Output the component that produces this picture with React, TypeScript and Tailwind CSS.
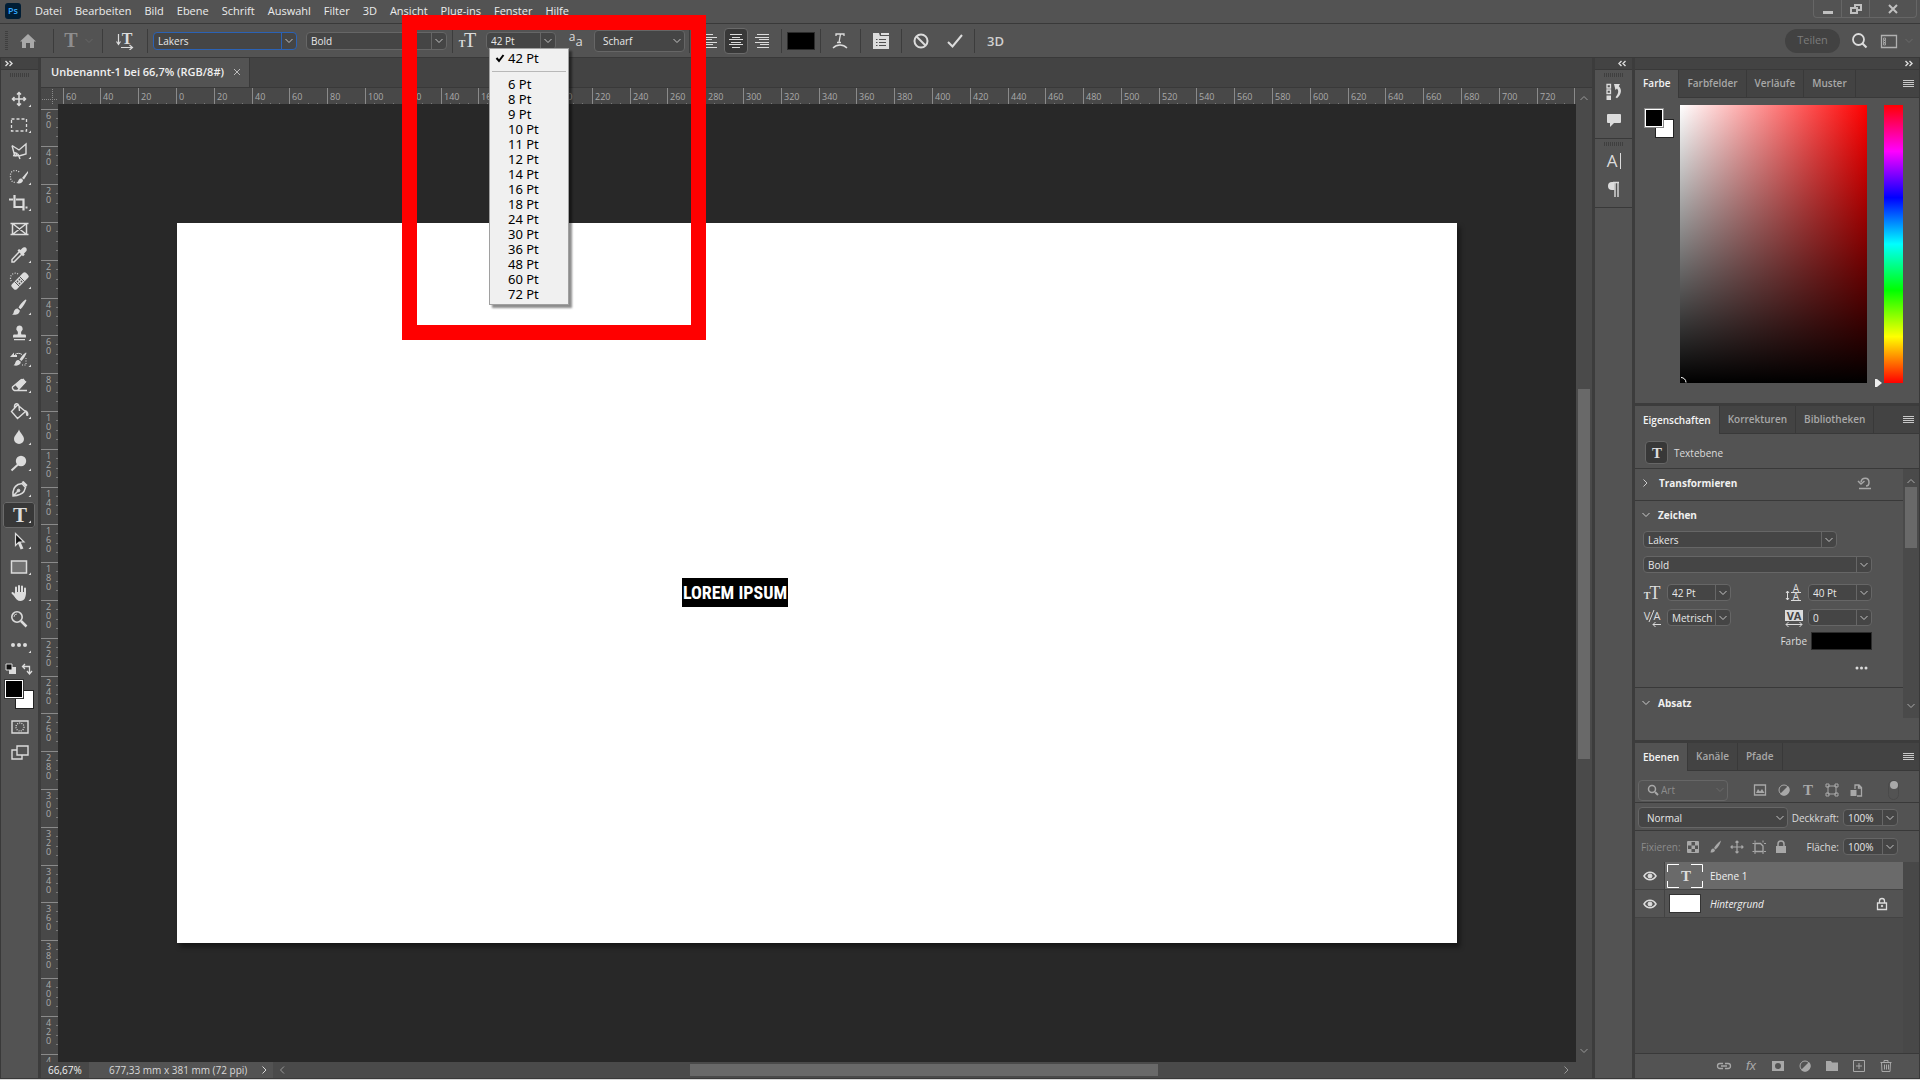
import type { ReactNode } from 'react';

const MM = 1280 / 677.33;

const menuItems = ['Datei', 'Bearbeiten', 'Bild', 'Ebene', 'Schrift', 'Auswahl', 'Filter', '3D', 'Ansicht', 'Plug-ins', 'Fenster', 'Hilfe'];
const sizes = [6, 8, 9, 10, 11, 12, 14, 16, 18, 24, 30, 36, 48, 60, 72];

const range = (from: number, to: number) => {
  const out: number[] = [];
  for (let v = from; v <= to; v += 20) out.push(v);
  return out;
};
const span = (v: number) => Math.round((v + 20) * MM) - Math.round(v * MM);

/* ---------- shared bits ---------- */

function Icon({ w = 18, h = 18, children, className = '' }: { w?: number; h?: number; children: ReactNode; className?: string }) {
  return (
    <svg width={w} height={h} viewBox={`0 0 ${w} ${h}`} fill="none" stroke="currentColor" className={`shrink-0 ${className}`} aria-hidden="true">
      {children}
    </svg>
  );
}

function Glyph({ x, y, size, children, sans = false, bold = true }: { x: number; y: number; size: number; children: string; sans?: boolean; bold?: boolean }) {
  return (
    <text
      x={x}
      y={y}
      fontSize={size}
      textAnchor="middle"
      stroke="none"
      fill="currentColor"
      className={sans ? "font-['Open_Sans',sans-serif]" : "font-['Liberation_Serif',serif]"}
      fontWeight={bold ? 700 : 400}
    >
      {children}
    </text>
  );
}

function Chevron({ dir = 'down', className = '' }: { dir?: 'down' | 'up' | 'left' | 'right'; className?: string }) {
  const d = {
    down: 'M1.5 3 5 6.5 8.5 3',
    up: 'M1.5 7 5 3.5 8.5 7',
    left: 'M7 1.5 3.5 5 7 8.5',
    right: 'M3.5 1.5 7 5 3.5 8.5',
  }[dir];
  return (
    <Icon w={10} h={10} className={className}>
      <path d={d} />
    </Icon>
  );
}

function Select({ label, value, className = '', split = true, focus = false }: { label: string; value: string; className?: string; split?: boolean; focus?: boolean }) {
  return (
    <div className={`relative flex rounded-sm border bg-[#454545] ${focus ? 'border-[#2b62b5]' : 'border-[#666666]'} ${className}`}>
      <select aria-label={label} defaultValue={value} className="w-full appearance-none bg-transparent pl-1 text-[10px] leading-[14px] text-[#e8e8e8] outline-none">
        <option>{value}</option>
      </select>
      <span className={`pointer-events-none absolute inset-y-0 right-0 flex w-[15px] items-center justify-center text-[#c4c4c4] ${split ? (focus ? 'border-l border-[#2b62b5]' : 'border-l border-[#666666]') : ''}`}>
        <Chevron />
      </span>
    </div>
  );
}

function Grip() {
  return <div className="mx-auto h-1 w-5 bg-[repeating-linear-gradient(90deg,#3f3f3f_0_1px,transparent_1px_2px)]" />;
}

function Divider() {
  return <div className="h-6 w-px shrink-0 bg-[#3c3c3c]" />;
}

function DoubleChevron({ left = false }: { left?: boolean }) {
  return (
    <Icon w={8} h={7} className="text-[#dddddd]">
      <path d={left ? 'M3.5 1 1 3.5 3.5 6M7.5 1 5 3.5 7.5 6' : 'M.5 1 3 3.5.5 6M4.5 1 7 3.5 4.5 6'} strokeWidth="1.4" />
    </Icon>
  );
}

const search = (
  <>
    <circle cx="7.5" cy="7.5" r="5.5" strokeWidth="1.8" />
    <path d="m11.5 11.5 4 4" strokeWidth="2.2" />
  </>
);

/* ---------- menu bar ---------- */

function MenuBar() {
  return (
    <header className="flex h-6 shrink-0 items-center border-b border-[#393939] pb-0.5">
      <div className="ml-[5px] flex size-4 items-center justify-center rounded-[3px] bg-[#001d34] text-[9px] font-semibold leading-4 text-[#31a8ff]">Ps</div>
      <nav className="ml-[14px] flex gap-[13px] text-[11px] leading-4 text-[#ececec]">
        {menuItems.map((m) => (
          <button key={m} type="button">{m}</button>
        ))}
      </nav>
      <div className="mr-[3px] ml-auto flex h-[18px] self-start rounded-b-sm border border-t-0 border-[#666666] text-[#c0c0c0]">
        <button type="button" aria-label="Minimieren" className="flex w-7 items-center justify-center border-r border-[#666666]">
          <Icon w={12} h={12}><path d="M1 9.5h10" strokeWidth="3" /></Icon>
        </button>
        <button type="button" aria-label="Wiederherstellen" className="flex w-7 items-center justify-center border-r border-[#666666]">
          <Icon w={14} h={12}>
            <path d="M2 5h6v5H2zM6 4V2h6v5H9" strokeWidth="2" />
          </Icon>
        </button>
        <button type="button" aria-label="Schließen" className="flex w-[46px] items-center justify-center">
          <Icon w={12} h={12}><path d="m2 2 8 8m0-8-8 8" strokeWidth="2" /></Icon>
        </button>
      </div>
    </header>
  );
}

/* ---------- options bar ---------- */

function SizeMenu() {
  return (
    <ul role="listbox" aria-label="Schriftgrad" className="absolute top-[16px] left-[3px] z-20 w-20 border border-[#a0a0a0] bg-[#f0f0f0] pt-px pb-0.5 font-['Noto_Sans',sans-serif] text-[13px] leading-[15px] text-black shadow-[3px_3px_2px_rgba(0,0,0,0.45)]">
      <li className="flex h-[17px] items-center">
        <Icon w={18} h={12} className="text-black"><path d="m6.500 6 2.500 3 4.500-6" strokeWidth="2" /></Icon>
        <button type="button">42 Pt</button>
      </li>
      <li className="mx-0.5 mt-[4px] mb-[5px] h-px bg-[#b8b8b8]" />
      {sizes.map((s) => (
        <li key={s} className="h-[15px] pl-[18px]">
          <button type="button" className="block">{s} Pt</button>
        </li>
      ))}
    </ul>
  );
}

function Align({ lines, label, active = false }: { lines: string; label: string; active?: boolean }) {
  return (
    <button type="button" aria-label={label} className={`flex h-[26px] w-6 shrink-0 items-center justify-center rounded-sm border ${active ? 'border-[#6a6a6a] bg-[#383838]' : 'border-transparent'}`}>
      <Icon w={14} h={14}><path d={lines} /></Icon>
    </button>
  );
}

function OptionsBar() {
  return (
    <div className="relative z-10 flex h-[34px] shrink-0 items-center border-b border-[#393939] text-[#dcdcdc]">
      <div className="ml-[5px] h-5 w-[3px] bg-[repeating-linear-gradient(#3f3f3f_0_1px,transparent_1px_2px)]" />
      <button type="button" aria-label="Startseite" className="ml-[11px] mr-4 text-[#a8a8a8]">
        <Icon><path d="m9 2 8 7.500h-2V16h-4v-5H7v5H3V9.500H1z" fill="currentColor" stroke="none" /></Icon>
      </button>
      <Divider />
      <button type="button" aria-label="Textwerkzeug" className="ml-2 flex items-center text-[#8e8e8e]">
        <Icon><Glyph x={9} y={15} size={20}>T</Glyph></Icon>
        <Chevron className="ml-1 text-[#666666]" />
      </button>
      <div className="w-2" />
      <Divider />
      <button type="button" aria-label="Textausrichtung" className="mx-[13px]">
        <Icon>
          <Glyph x={11} y={12} size={16}>T</Glyph>
          <path d="M2.500 2v10M.5 9.500l2 3 2-3M5 15.500h11M13.500 13l3 2.500-3 2.500" strokeWidth="1.2" />
        </Icon>
      </button>
      <Divider />
      <Select label="Schriftfamilie" value="Lakers" focus className="ml-[5px] h-[18px] w-36" />
      <Select label="Schriftschnitt" value="Bold" className="ml-[9px] mr-[5px] h-[18px] w-[141px]" />
      <Divider />
      <Icon w={20} className="mr-[8px] ml-[5px]">
        <Glyph x={4} y={15} size={10}>T</Glyph>
        <Glyph x={12} y={15} size={20} bold={false}>T</Glyph>
      </Icon>
      <div className="relative">
        <Select label="Schriftgrad" value="42 Pt" className="h-[18px] w-[70px]" />
        <SizeMenu />
      </div>
      <Icon className="ml-[11px]">
        <Glyph x={5} y={9} size={12} sans bold={false}>a</Glyph>
        <Glyph x={12} y={14} size={13} sans bold={false}>a</Glyph>
      </Icon>
      <Select label="Glättung" value="Scharf" split={false} className="ml-[9px] mr-[4px] h-[22px] w-[91px] pl-1" />
      <Divider />
      <div className="ml-[8px] flex gap-[2px]">
        <Align label="Linksbündig" lines="M0 .5h10M0 3.500h14M0 5.500h9M0 8.500h14M0 10.500h10M0 13.500h14" />
        <Align label="Zentriert" active lines="M1 .5h12M3 3.500h8M0 5.500h14M2 8.500h10M0 10.500h14M3 13.500h8" />
        <Align label="Rechtsbündig" lines="M2 .5h12M0 3.500h14M4 5.500h10M0 8.500h14M5 10.500h9M2 13.500h12" />
      </div>
      <div className="w-[7px]" />
      <Divider />
      <button type="button" aria-label="Textfarbe" className="mx-[5px] h-[18px] w-7 border border-[#2c2c2c] bg-black" />
      <Divider />
      <button type="button" aria-label="Text verkrümmen" className="mr-[11px] ml-[10px]">
        <Icon>
          <path d="M5 4V2h8v2M9.500 2 8 10.500M6 10.500h4" strokeWidth="1.3" />
          <path d="M2 16c4-4 10-4 14 0" strokeWidth="1.4" />
        </Icon>
      </button>
      <Divider />
      <button type="button" aria-label="Zeichenbedienfeld" className="mx-[11px]">
        <Icon>
          <path d="M1 1h6l1 3h9v13H1zM9 1h8v2H9z" fill="currentColor" stroke="none" />
          <path d="M4 7.500h1.500M7 7.500h7M4 10.500h1.500M7 10.500h7M4 13.500h1.500M7 13.500h7" className="stroke-[#505050]" />
        </Icon>
      </button>
      <Divider />
      <button type="button" aria-label="Abbrechen" className="ml-[10px] mr-4">
        <Icon><circle cx="9" cy="9" r="6.500" strokeWidth="2" /><path d="m4.500 4.500 9 9" strokeWidth="2" /></Icon>
      </button>
      <button type="button" aria-label="Bestätigen" className="mr-[10px]">
        <Icon><path d="m2 10 4.500 4.500L16 3" strokeWidth="2" /></Icon>
      </button>
      <Divider />
      <button type="button" className="ml-3 text-[13px] leading-4 font-semibold text-[#d0d0d0]">3D</button>
      <button type="button" className="ml-auto h-6 w-[55px] rounded-full bg-[#424242] text-[11px] text-[#7c7c7c]">Teilen</button>
      <button type="button" aria-label="Suchen" className="ml-[11px]"><Icon>{search}</Icon></button>
      <button type="button" aria-label="Arbeitsbereich" className="ml-[11px] flex items-center text-[#b0b0b0]">
        <Icon>
          <path d="M1.500 3.500h15v12h-15z" strokeWidth="1.300" />
          <path d="M3.500 6h2v2h-2zM3.500 8.500h2v2h-2zM3.500 11h2v2h-2z" strokeWidth=".8" />
        </Icon>
        <Chevron className="mr-[6px] ml-[6px] text-[#6a6a6a]" />
      </button>
    </div>
  );
}

/* ---------- toolbar ---------- */

const brush = <path d="M20.500 5.500c-3 2-5.500 5-7 8l2 1.800c2.500-2.500 5-6.300 6-9.300zM12.500 14.500c-2.500-.3-3.500 2-4 4.500-.2.800-1 1.200-1.500 1.500 4 1 7.800-.5 7.800-4z" fill="currentColor" stroke="none" />;

const tools: { name: string; art: ReactNode; flat?: boolean }[] = [
  { name: 'Verschieben', art: <path d="M14 6.500v13M7.500 13h13M12 8.500l2-2 2 2M12 17.500l2 2 2-2M9.500 11l-2 2 2 2M18.500 11l2 2-2 2" strokeWidth="1.500" /> },
  { name: 'Auswahlrechteck', art: <path d="M6.500 7h15v12h-15z" strokeWidth="1.300" strokeDasharray="3 2" /> },
  { name: 'Polygon-Lasso', art: <path d="m7 7.500 7 4.500 7-6v10l-7 2-4.500-1L7 7.500M9 14.500l3 1-1 2.500-3-.5M13 16l2 5" strokeWidth="1.400" /> },
  {
    name: 'Schnellauswahl',
    art: (
      <>
        <path d="M14 8c-2-2.500-8-2-8.500 2.500-.3 4 0 8 6 8" strokeDasharray="1 1.500" strokeWidth="1.300" />
        <path d="m23 7-6 7 2 1.500L23 9zM16.500 14.500c-2-.5-3 1-3.500 3l-1.500 1.500c3 1 6.500 0 6.500-3z" fill="currentColor" stroke="none" />
      </>
    ),
  },
  { name: 'Freistellen', art: <path d="M4 9.500h4M9.500 5v12h8M11 9.500h7.500v11M20.500 17.500h2" strokeWidth="2.200" /> },
  { name: 'Rahmen', flat: true, art: <path d="M7.500 7.500h14v11h-14zM7.500 7.500l14 11m0-11-14 11M5.500 7.500h3M20.500 7.500h3M5.500 18.500h3M20.500 18.500h3" strokeWidth="1.500" /> },
  {
    name: 'Pipette',
    art: (
      <>
        <path d="M14.500 9.500 7 17.500v2.500h2l8-8" strokeWidth="1.500" />
        <path d="m12.500 8.500 1.500-1.500 1.500 1 2-2c1-1.200 3.500-.8 4 .5.600 1.500 0 2.500-1 3.500l-1.500 1.500.7 1.200-1.700 1.600z" fill="currentColor" stroke="none" />
      </>
    ),
  },
  {
    name: 'Reparaturpinsel',
    art: (
      <>
        <path d="M13 6c-3-2-7.500 0-7.500 4 0 2 .5 3 1.500 4" strokeDasharray="1 1.500" strokeWidth="1.200" />
        <rect x="5" y="9.500" width="20" height="7" rx="2" transform="rotate(-45 15 13)" fill="currentColor" stroke="none" />
        <path d="m9.500 13.500 5 5M14.500 8.500l5 5" className="stroke-[#535353]" />
        <g className="fill-[#535353]" stroke="none">
          <circle cx="14.500" cy="11.500" r=".9" /><circle cx="12.500" cy="13.500" r=".9" /><circle cx="16.500" cy="13.500" r=".9" /><circle cx="14.500" cy="15.500" r=".9" />
        </g>
      </>
    ),
  },
  { name: 'Pinsel', art: brush },
  {
    name: 'Stempel',
    art: (
      <path d="M14.500 5.500a3.200 3.200 0 0 1 2 5.700c-.6.700-.5 2.300 0 3.300H20c1 0 1 1 1 3H8c0-2 0-3 1-3h3.500c.5-1 .6-2.600 0-3.300a3.200 3.200 0 0 1 2-5.700zM9 19h11v1.200H9z" fill="currentColor" stroke="none" />
    ),
  },
  {
    name: 'Protokollpinsel',
    art: (
      <>
        <path d="M21 6.500c-3 2-5 4.500-6.500 7l2 1.500c2-2 4.200-5.500 5-8zM13.500 14c-2-.2-3 1.500-3.500 3.500-.2.800-1 1.500-1.500 1.800 4 1 7.300-.3 7.300-3.500zM5 11l4-4.500V9h3v2z" fill="currentColor" stroke="none" />
        <path d="M10 8.500c2-1.500 5-1.500 7 0" />
        <path d="M21 12v7h-4" strokeDasharray="1 1.500" />
      </>
    ),
  },
  {
    name: 'Radiergummi',
    art: (
      <>
        <path d="m15 8 3.500-1.500L21 10l-7 7.500-3.800-4.500z" fill="currentColor" stroke="none" />
        <path d="m16.500 7.500-9 7.500c-.5 1 .5 3 2 3.500h3l8-8.500zM10 18.500h12" strokeWidth="1.400" />
      </>
    ),
  },
  {
    name: 'Füllwerkzeug',
    art: (
      <>
        <path d="m12.500 7-6 6.500 6 7 8-7zM9.500 10c-.5-5 4-6 4.500-1l.5 4" strokeWidth="1.400" />
        <path d="M20 12c2 .5 3.500 2 3.500 4.500 0 2-2.500 2-2.500 0z" fill="currentColor" stroke="none" />
      </>
    ),
  },
  { name: 'Weichzeichner', art: <path d="M14 5.500c1 3.500 5 6 5 9.500a5 5 0 0 1-10 0c0-3.500 4-6 5-9.500z" fill="currentColor" stroke="none" /> },
  {
    name: 'Abwedler',
    art: (
      <>
        <circle cx="16" cy="11" r="5.200" fill="currentColor" stroke="none" />
        <path d="m13 14.500-6.500 6" strokeWidth="2" />
      </>
    ),
  },
  {
    name: 'Zeichenstift',
    art: (
      <>
        <path d="M8 20c-.5-5 1-9.500 5-11.500l4-1 3.500 4-1.500 4c-2.500 3.500-6.500 4-11 4.500zM8 20l5-5" strokeWidth="1.500" />
        <circle cx="13.500" cy="14.500" r="1.300" fill="currentColor" />
        <path d="m16.500 6 2-1 4 4-1.500 2z" fill="currentColor" stroke="none" />
      </>
    ),
  },
  { name: 'Text', art: <Glyph x={15} y={20} size={21}>T</Glyph> },
  {
    name: 'Pfadauswahl',
    art: (
      <>
        <path d="m14 14 3 7" strokeWidth="3" />
        <path d="M10.500 5.500v12l3.500-3.500h5z" className="fill-[#161616]" strokeWidth="1.200" />
      </>
    ),
  },
  { name: 'Rechteck', art: <path d="M6.500 7h15v12h-15z" className="fill-[#737373]" strokeWidth="1.500" /> },
  {
    name: 'Hand',
    art: (
      <>
        <path d="M11 13V7.500M14 12V6M17 12V6.500M20 13.500V8.500M11 16.500 7.500 13" strokeWidth="2" strokeLinecap="round" />
        <path d="M10 12h11c0 5-1.500 9-5.500 9-3 0-5-2-6.500-5.500z" fill="currentColor" stroke="none" />
      </>
    ),
  },
  {
    name: 'Zoom',
    flat: true,
    art: (
      <>
        <circle cx="12" cy="11" r="5.200" strokeWidth="1.600" />
        <path d="m16 15 5.500 5.500" strokeWidth="2.500" />
        <path d="M9 11a3 3 0 0 1 3-3" strokeWidth=".8" />
      </>
    ),
  },
  {
    name: 'Symbolleiste bearbeiten',
    art: (
      <g fill="currentColor" stroke="none">
        <circle cx="8" cy="13" r="2" /><circle cx="14" cy="13" r="2" /><circle cx="20" cy="13" r="2" />
      </g>
    ),
  },
];

function Toolbar() {
  return (
    <aside className="flex w-[41px] shrink-0 flex-col border-l border-l-[#393939] border-r-[3px] border-r-[#3c3c3c] text-[#dcdcdc]">
      <div className="flex h-3 items-center border-b border-[#393939] bg-[#434343] pl-1">
        <DoubleChevron />
      </div>
      <div className="pt-[3px] pb-[9px]"><Grip /></div>
      <div className="flex flex-col pl-[2px]">
        {tools.map((t) => (
          <button
            key={t.name}
            type="button"
            aria-label={t.name}
            className={`flex h-[26px] w-8 items-center justify-center rounded-[3px] ${t.name === 'Text' ? 'bg-[#383838] outline -outline-offset-1 outline-[#6a6a6a]' : ''}`}
          >
            <Icon w={28} h={26}>
              {t.art}
              {!t.flat && <path d="M26 18.500V21h-2.500z" fill="currentColor" stroke="none" />}
            </Icon>
          </button>
        ))}
      </div>
      <div className="mt-[5px] flex items-center justify-between pr-[5px] pl-1">
        <Icon w={12} h={12}>
          <path d="M4 4h7v7H4z" fill="currentColor" stroke="none" />
          <path d="M1 1h6v6H1z" className="fill-[#111111]" />
        </Icon>
        <Icon w={12} h={12}><path d="M2 3.500h6.500V10M4 1 1.500 3.500 4 6M6 8l2.500 3L11 8" strokeWidth="1.300" /></Icon>
      </div>
      <div className="mt-[5px] grid w-[29px] self-start pl-1">
        <span className="col-start-1 row-start-1 mt-[10px] ml-[10px] size-[19px] border border-[#222222] bg-white" />
        <span className="z-10 col-start-1 row-start-1 size-[18px] border border-white bg-black outline outline-[#333333]" />
      </div>
      <div className="mt-[9px] flex flex-col items-center gap-[8px]">
        <button type="button" aria-label="Maskierungsmodus">
          <Icon><path d="M1 3h16v12H1z" strokeWidth="1.400" /><circle cx="9" cy="9" r="4" strokeDasharray="1 1.200" strokeWidth="1.300" /></Icon>
        </button>
        <button type="button" aria-label="Bildschirmmodus">
          <Icon><path d="M6 2h11v9H6zM6 6H1v9h10v-4" strokeWidth="1.400" /></Icon>
        </button>
      </div>
    </aside>
  );
}

/* ---------- document ---------- */

function TopRuler() {
  return (
    <div className="flex min-w-0 flex-1 overflow-hidden pl-[5px]">
      {range(-60, 740).map((v) => (
        <div key={v} className="flex shrink-0 flex-col justify-between border-l border-[#8a8a8a]" style={{ width: span(v) }}>
          <span className="pt-[3px] pl-0.5 text-[9px] leading-3 text-[#aaaaaa]">{v > 720 ? '' : Math.abs(v)}</span>
          <span className="grid h-0.5 shrink-0 grid-cols-4 divide-x divide-[#7a7a7a]"><i /><i /><i /><i /></span>
        </div>
      ))}
    </div>
  );
}

function SideRuler() {
  return (
    <div className="flex h-full w-[17px] shrink-0 flex-col overflow-hidden bg-[#484848] pt-[5px]">
      {range(-60, 440).map((v) => (
        <div key={v} className="flex shrink-0 justify-between border-t border-[#8a8a8a]" style={{ height: span(v) }}>
          <span className="flex w-4 flex-col items-center pt-px text-[9px] leading-[9px] text-[#aaaaaa]">
            {String(Math.abs(v)).split('').map((c, i) => (
              <span key={i}>{c}</span>
            ))}
          </span>
          <span className="grid w-0.5 shrink-0 grid-rows-4 divide-y divide-[#7a7a7a]"><i /><i /><i /><i /></span>
        </div>
      ))}
    </div>
  );
}

function Document() {
  return (
    <main className="flex min-w-0 flex-1 flex-col">
      <div className="flex h-[30px] shrink-0 border-b border-[#393939] bg-[#434343]">
        <div className="flex items-center gap-[9px] border-r border-[#393939] bg-[#535353] pr-2 pb-px pl-[10px] text-[11px] font-semibold text-[#f0f0f0]">
          <h1>Unbenannt-1 bei 66,7% (RGB/8#)</h1>
          <button type="button" aria-label="Tab schließen">
            <Icon w={8} h={8} className="text-[#bbbbbb]"><path d="m1 1 6 6m0-6L1 7" /></Icon>
          </button>
        </div>
      </div>
      <div className="flex min-h-0 flex-1">
        <div className="flex min-w-0 flex-1 flex-col">
          <div className="flex h-[16px] shrink-0 bg-[#484848]">
            <div className="flex w-[17px] shrink-0">
              <Icon w={17} h={16} className="text-[#8a8a8a]"><path d="M1 11.500h16M11.500 1v15" strokeDasharray="1 1" /></Icon>
            </div>
            <TopRuler />
          </div>
          <div className="flex min-h-0 flex-1">
            <SideRuler />
            <div className="flex min-w-0 flex-1 items-center justify-center overflow-hidden bg-[#282828]">
              <div className="flex h-[720px] w-[1280px] shrink-0 items-center justify-center bg-white pb-[1px] shadow-[3px_4px_5px_rgba(0,0,0,0.45)]">
                <p className="mr-[164px] mt-5 flex h-[29px] w-[106px] items-center justify-center bg-black font-['Liberation_Sans_Narrow','Roboto_Condensed','Roboto',sans-serif] text-[18px] leading-7 font-bold whitespace-nowrap text-white">LOREM IPSUM</p>
              </div>
            </div>
          </div>
        </div>
        <div className="flex w-4 shrink-0 flex-col items-center bg-[#4a4a4a] pt-[5px] pb-[6px] text-[#999999]">
          <Chevron dir="up" />
          <div className="flex w-full min-h-0 flex-1 flex-col items-center pt-[286px]">
            <div className="h-[370px] w-3 bg-[#696969]" />
          </div>
          <Chevron />
        </div>
      </div>
      <div className="flex h-4 shrink-0 items-center bg-[#4a4a4a] text-[10px] leading-[14px] text-[#d8d8d8]">
        <input aria-label="Zoomstufe" defaultValue="66,67%" className="h-4 w-12 bg-[#484848] pl-[7px] text-[#f0f0f0]" />
        <div className="flex h-4 w-46 items-center justify-between bg-[#535353] pr-1 pl-5">
          <span>677,33 mm x 381 mm (72 ppi)</span>
          <Chevron dir="right" />
        </div>
        <Chevron dir="left" className="ml-1 text-[#999999]" />
        <div className="flex flex-1 justify-center">
          <div className="h-3 w-[468px] bg-[#696969]" />
        </div>
        <Chevron dir="right" className="mr-[21px] text-[#999999]" />
      </div>
    </main>
  );
}

/* ---------- right dock ---------- */

function IconDock() {
  return (
    <aside className="flex w-[43px] shrink-0 flex-col border-x-[3px] border-[#3c3c3c] text-[#dcdcdc]">
      <div className="flex h-3 items-center justify-end border-b border-[#393939] bg-[#434343] pr-[6px]">
        <DoubleChevron left />
      </div>
      <div className="h-[69px] border-b border-[#393939] pt-[3px]">
        <Grip />
        <div className="flex flex-col items-center gap-[10px] pt-[6px]">
          <button type="button" aria-label="Protokoll">
            <Icon>
              <path d="M2 1.500h3.500V5H2zM2 7h3.500v3.500H2z" strokeWidth="1.300" />
              <path d="M1.500 12.500h4.500V17H1.500zM9 1h6L13.800 3.300c3.500 3.200 2.700 8-1.800 12l-1.500-1c3-3.500 3.500-6.500 1.500-8.800L10.500 7z" fill="currentColor" stroke="none" />
            </Icon>
          </button>
          <button type="button" aria-label="Kommentare">
            <Icon><path d="M3 3h12q1 0 1 1v7q0 1-1 1H9l-4 4v-4H3q-1 0-1-1V4q0-1 1-1z" fill="currentColor" stroke="none" /></Icon>
          </button>
        </div>
      </div>
      <div className="h-[69px] border-b border-[#393939] pt-[3px]">
        <Grip />
        <div className="flex flex-col items-center gap-[10px] pt-[6px]">
          <button type="button" aria-label="Zeichen">
            <Icon><Glyph x={7} y={15} size={17} sans bold={false}>A</Glyph><path d="M15.500 1v16" /></Icon>
          </button>
          <button type="button" aria-label="Absatz">
            <Icon>
              <path d="M13 2v15M10 2v15M8 2.500h6" strokeWidth="1.400" />
              <path d="M9.500 2H7a4 4 0 0 0 0 8h2.500z" fill="currentColor" stroke="none" />
            </Icon>
          </button>
        </div>
      </div>
    </aside>
  );
}

function Tabs({ items }: { items: string[] }) {
  return (
    <div role="tablist" className="flex h-[28px] shrink-0 items-stretch bg-[#434343] text-[10px] font-semibold">
      {items.map((t, i) => (
        <button
          key={t}
          type="button"
          role="tab"
          aria-selected={i === 0}
          className={`border-r border-[#393939] px-2 pb-px ${i === 0 ? 'bg-[#535353] text-[#f4f4f4]' : 'border-b text-[#a8a8a8]'}`}
        >
          {t}
        </button>
      ))}
      <div className="flex flex-1 items-center justify-end border-b border-[#393939] pr-[5px] text-[#c8c8c8]">
        <Icon w={11} h={8}><path d="M0 .5h11M0 2.500h11M0 4.500h11M0 6.500h11" /></Icon>
      </div>
    </div>
  );
}

function ColorPanel() {
  return (
    <section className="flex h-[336px] shrink-0 flex-col border-b-[3px] border-[#3c3c3c]">
      <Tabs items={['Farbe', 'Farbfelder', 'Verläufe', 'Muster']} />
      <div className="flex pt-[7px] pl-[10px]">
        <div className="grid w-[35px] shrink-0 self-start pt-1">
          <span className="col-start-1 row-start-1 mt-[10px] ml-[10px] size-[19px] border border-[#222222] bg-white" />
          <span className="z-10 col-start-1 row-start-1 size-[18px] border border-white bg-black outline outline-[#8a8a8a]" />
        </div>
        <div className="flex h-[278px] min-w-0 flex-1 items-end bg-[linear-gradient(to_top,#000,transparent),linear-gradient(to_right,#fff,#f00)]">
          <Icon w={7} h={7} className="text-white"><path d="M1 1.500a5 5 0 0 1 5 5" /></Icon>
        </div>
        <div className="flex w-[17px] items-end justify-end pr-0.5">
          <Icon w={8} h={8} className="-mb-1"><path d="M1 0h2l5 4-5 4H1z" className="fill-[#eeeeee]" stroke="none" /></Icon>
        </div>
        <div className="mr-4 h-[278px] w-[19px] bg-[linear-gradient(to_bottom,#f00,#f0f,#00f,#0ff,#0f0,#ff0,#f00)]" />
      </div>
    </section>
  );
}

const leading = (
  <>
    <Glyph x={11} y={8} size={10} sans bold={false}>A</Glyph>
    <Glyph x={11} y={16} size={10} sans bold={false}>A</Glyph>
    <path d="M6 8.500h10M6 16.500h10M2.500 7v9M1 9l1.500-2L4 9M1 14l1.500 2L4 14" />
  </>
);
const kerning = (
  <>
    <Glyph x={4} y={11} size={11} sans bold={false}>V</Glyph>
    <Glyph x={14} y={11} size={11} sans bold={false}>A</Glyph>
    <path d="m6 13 5-12M10 15.500h8M12.500 13 10 15.500l2.500 2.500" />
  </>
);
const tracking = (
  <>
    <path d="M0 1h18v11H0z" fill="currentColor" stroke="none" />
    <text x="9" y="11" fontSize="11" fontWeight="700" textAnchor="middle" stroke="none" className="fill-[#444444] font-['Open_Sans',sans-serif]">VA</text>
    <path d="M1 15.500h16M3.500 13 1 15.500 3.500 18M14.500 13l2.500 2.500-2.500 2.500" />
  </>
);

function PropertiesPanel() {
  return (
    <section className="flex h-[337px] shrink-0 flex-col border-b-[3px] border-[#3c3c3c] text-[10px] leading-[14px]">
      <Tabs items={['Eigenschaften', 'Korrekturen', 'Bibliotheken']} />
      <div className="flex h-[35px] shrink-0 items-center gap-[6px] border-b border-[#393939] pt-[3px] pl-[10px]">
        <span className="flex size-[23px] items-center justify-center rounded-sm border border-[#666666] bg-[#383838]">
          <Icon><Glyph x={9} y={14} size={15}>T</Glyph></Icon>
        </span>
        Textebene
      </div>
      <div className="flex min-h-0 flex-1">
        <div className="flex min-w-0 flex-1 flex-col">
          <div className="flex h-8 shrink-0 items-center border-b border-[#393939] pr-[30px] pb-[3px] pl-[5px] font-bold text-[#f0f0f0]">
            <Chevron dir="right" className="mr-[9px] text-[#cccccc]" />
            Transformieren
            <button type="button" aria-label="Zurücksetzen" className="ml-auto text-[#a8a8a8]">
              <Icon w={16} h={14}><path d="M2 12.500h12M4 6c1-5 8-5 8 .5 0 2-1 3.500-3 3.500M1 5l3 3 3.500-3" strokeWidth="1.500" /></Icon>
            </button>
          </div>
          <div className="flex h-[187px] shrink-0 flex-col border-b border-[#393939] pr-[31px] pl-2">
            <h2 className="-ml-[2px] flex h-[30px] items-center gap-[7px] pb-0.5 font-bold text-[#f0f0f0]">
              <Chevron className="text-[#cccccc]" />
              Zeichen
            </h2>
            <Select label="Schriftfamilie" value="Lakers" className="h-[17px] w-[194px]" />
            <Select label="Schriftschnitt" value="Bold" className="mt-[8px] h-[17px]" />
            <div className="mt-[11px] flex h-[17px] items-center">
              <Icon className="mr-[6px]"><Glyph x={4} y={15} size={10}>T</Glyph><Glyph x={12} y={15} size={18} bold={false}>T</Glyph></Icon>
              <Select label="Schriftgrad" value="42 Pt" className="h-[17px] w-[64px]" />
              <Icon className="mr-[5px] ml-auto">{leading}</Icon>
              <Select label="Zeilenabstand" value="40 Pt" className="h-[17px] w-[64px]" />
            </div>
            <div className="mt-[8px] flex h-[17px] items-center">
              <Icon className="mr-[6px]">{kerning}</Icon>
              <Select label="Kerning" value="Metrisch" className="h-[17px] w-[64px]" />
              <Icon className="mr-[5px] ml-auto">{tracking}</Icon>
              <Select label="Laufweite" value="0" className="h-[17px] w-[64px]" />
            </div>
            <div className="mt-[6px] flex items-center justify-end gap-1">
              <span id="farbe">Farbe</span>
              <button type="button" aria-labelledby="farbe" className="h-[18px] w-[61px] border border-[#2c2c2c] bg-black" />
            </div>
            <button type="button" aria-label="Weitere Optionen" className="mt-[14px] mr-1 self-end">
              <Icon w={13} h={8}>
                <g fill="currentColor" stroke="none"><circle cx="2" cy="4" r="1.500" /><circle cx="6.500" cy="4" r="1.500" /><circle cx="11" cy="4" r="1.500" /></g>
              </Icon>
            </button>
          </div>
          <h2 className="flex h-[30px] items-center gap-[7px] pb-px pl-[6px] font-bold text-[#f0f0f0]">
            <Chevron className="text-[#cccccc]" />
            Absatz
          </h2>
        </div>
        <div className="mb-[22px] flex w-4 flex-col items-center justify-between bg-[#4a4a4a] py-[7px] text-[#aaaaaa]">
          <div className="flex flex-col items-center gap-px">
            <Chevron dir="up" />
            <div className="h-[61px] w-3 bg-[#696969]" />
          </div>
          <Chevron />
        </div>
      </div>
    </section>
  );
}

const imageIcon = <><path d="M3.500 4h11v10h-11z" strokeWidth="1.300" /><path d="m5 12 2-4 2 2.500L11 8l2.500 4z" fill="currentColor" stroke="none" /></>;
const adjustIcon = <><circle cx="9" cy="9" r="5" /><path d="M13 5a5.500 5.500 0 1 1-8 8z" fill="currentColor" stroke="none" /></>;
const shapeIcon = <path d="M5 5h8v8H5zM3 3h3v3H3zM12 3h3v3h-3zM3 12h3v3H3zM12 12h3v3h-3z" />;
const smartIcon = <><path d="M8 8V4h4l2.500 2.500V15H10M11.500 4v3h3" strokeWidth="1.300" /><path d="M3.500 9h6v6h-6z" fill="currentColor" stroke="none" /></>;
const lockIcon = <><path d="M4 8h10v7H4z" fill="currentColor" stroke="none" /><path d="M6 8V6a3 3 0 0 1 6 0v2" strokeWidth="1.500" /></>;
const checkerIcon = <><path d="M3.500 3.500h11v11h-11z" /><path d="M4 4h3.500v3.500H4zM11 4h3.500v3.500H11zM7.500 7.500H11V11H7.500zM4 11h3.500v3.500H4zM11 11h3.500v3.500H11z" fill="currentColor" stroke="none" /></>;
const moveIcon = <path d="M9 3v12M3 9h12M7.500 4.500 9 3l1.500 1.500M7.500 13.500 9 15l1.500-1.500M4.500 7.500 3 9l1.500 1.500M13.500 7.500 15 9l-1.500 1.500" strokeWidth="1.200" />;
const artboardIcon = <><path d="M5 5.500h5.500L13 8v5.500H5z" strokeWidth="1.300" /><path d="M2.500 5.500h2M5 2.500v2M13 14v2M14 13.500h2M13 2.500v2M14 5.500h2M5 14v2M2.500 13.500h2" /></>;
const brushIcon = <path d="M15 2.500C12 4.500 9 8 8 10l1.500 1.500C12 9.500 14.500 6 15 2.500zM7.500 10.500c-2 0-2.500 1.500-3 4 2.500 0 4.500-.5 4.500-2.500z" fill="currentColor" stroke="none" />;

function Eye() {
  return (
    <button type="button" aria-label="Ebenensichtbarkeit" className="flex w-[30px] shrink-0 items-center justify-center self-stretch border-r border-[#434343] bg-[#535353]">
      <Icon w={14} h={10}>
        <path d="M1 5c3-5 9-5 12 0-3 5-9 5-12 0z" strokeWidth="1.500" />
        <circle cx="7" cy="5" r="2" fill="currentColor" />
      </Icon>
    </button>
  );
}

function LayersPanel() {
  return (
    <section className="flex min-h-0 flex-1 flex-col text-[10px] leading-[14px]">
      <Tabs items={['Ebenen', 'Kanäle', 'Pfade']} />
      <div className="flex h-8 shrink-0 items-center border-b border-[#393939] pt-[7px] pr-[20px] pl-[3px] text-[#a8a8a8]">
        <div className="relative flex h-[21px] w-[90px] items-center rounded-sm border border-[#666666] pl-2">
          <Icon w={12} h={12}><circle cx="5" cy="5" r="3.500" strokeWidth="1.500" /><path d="m8 8 3 3" strokeWidth="2" /></Icon>
          <input aria-label="Ebenenfilter" placeholder="Art" className="ml-0.5 w-10 bg-transparent placeholder:text-[#8c8c8c]" />
          <Chevron className="ml-auto mr-[2px] text-[#6a6a6a]" />
        </div>
        <div className="ml-[23px] flex gap-[6px]">
          <Icon>{imageIcon}</Icon>
          <Icon>{adjustIcon}</Icon>
          <Icon><Glyph x={9} y={14} size={15}>T</Glyph></Icon>
          <Icon>{shapeIcon}</Icon>
          <Icon>{smartIcon}</Icon>
        </div>
        <span className="ml-auto flex h-5 w-[11px] items-start justify-center rounded-md border border-[#4a4a4a]">
          <span className="size-2 rounded-full bg-[#a8a8a8]" />
        </span>
      </div>
      <div className="flex h-7 shrink-0 items-center border-b border-[#393939] pt-0.5 pr-[21px] pl-[3px]">
        <Select label="Füllmethode" value="Normal" split={false} className="h-[21px] w-[150px] pl-1" />
        <span className="ml-auto">Deckkraft:</span>
        <Select label="Deckkraft" value="100%" className="ml-1 h-[17px] w-[55px]" />
      </div>
      <div className="flex h-[31px] shrink-0 items-center pr-[21px] pl-[6px]">
        <span className="text-[#8c8c8c]">Fixieren:</span>
        <div className="ml-[3px] flex gap-1 text-[#a8a8a8]">
          <Icon>{checkerIcon}</Icon>
          <Icon>{brushIcon}</Icon>
          <Icon>{moveIcon}</Icon>
          <Icon>{artboardIcon}</Icon>
          <Icon>{lockIcon}</Icon>
        </div>
        <span className="ml-auto">Fläche:</span>
        <Select label="Fläche" value="100%" className="ml-1 h-[17px] w-[55px]" />
      </div>
      <div className="flex min-h-0 flex-1 bg-[#4b4b4b]">
        <ul className="min-w-0 flex-1">
          <li className="flex h-7 items-center border-b border-[#434343] bg-[#6a6a6a]">
            <Eye />
            <Icon w={36} h={24} className="mr-[7px] ml-[2px] text-white">
              <path d="M.5 8V.5H12M24 .5h11.500V8M.5 17v6.500H12M24 23.500h11.500V17" />
              <g className="text-[#dcdcdc]"><Glyph x={19} y={17} size={15}>T</Glyph></g>
            </Icon>
            <span className="text-[#f0f0f0]">Ebene 1</span>
          </li>
          <li className="flex h-7 items-center border-b border-[#434343] bg-[#535353]">
            <Eye />
            <span className="mr-[9px] ml-1 h-[19px] w-8 border border-[#333333] bg-white" />
            <span className="text-[#f0f0f0] italic">Hintergrund</span>
            <Icon w={12} h={14} className="mr-[15px] ml-auto"><path d="M1.500 6h9v6.500h-9zM3.500 6V4a2.500 2.500 0 0 1 5 0v2" strokeWidth="1.300" /><circle cx="6" cy="9" r=".8" fill="currentColor" /></Icon>
          </li>
        </ul>
        <div className="w-4 bg-[#484848]" />
      </div>
      <footer className="flex h-[25px] shrink-0 items-center justify-end gap-[9px] border-t border-[#393939] pr-[24px] text-[#a8a8a8]">
        <button type="button" aria-label="Ebenen verknüpfen"><Icon><path d="M8 6.500H5a2.500 2.500 0 0 0 0 5h3M10 6.500h3a2.500 2.500 0 0 1 0 5h-3M6 9h6" strokeWidth="1.300" /></Icon></button>
        <button type="button" className="w-[18px] font-['Liberation_Sans',sans-serif] text-[13px] italic">fx</button>
        <button type="button" aria-label="Ebenenmaske"><Icon><path d="M3 4h12v10H3zm6 2a3 3 0 1 0 0 6 3 3 0 0 0 0-6z" fill="currentColor" fillRule="evenodd" stroke="none" /></Icon></button>
        <button type="button" aria-label="Einstellungsebene"><Icon>{adjustIcon}</Icon></button>
        <button type="button" aria-label="Gruppe"><Icon><path d="M3 4h5l1 1.500h6V14H3z" fill="currentColor" stroke="none" /></Icon></button>
        <button type="button" aria-label="Neue Ebene"><Icon><path d="M3.500 3.500h11v11h-11zM9 6v6M6 9h6" /></Icon></button>
        <button type="button" aria-label="Löschen"><Icon><path d="M3.500 5.500h11M7 5V3.500h4V5M4.500 5.500l.5 9h8l.5-9M7.500 7.500v5M9.500 7.500v5M11.500 7.500v5" /></Icon></button>
      </footer>
    </section>
  );
}

export default function App() {
  return (
    <div className="relative flex h-screen flex-col overflow-hidden border-b border-[#d8d8d8] bg-[#535353] font-['Open_Sans','Noto_Sans',sans-serif] text-[#dcdcdc]">
      <MenuBar />
      <OptionsBar />
      <div className="flex min-h-0 flex-1 border-b border-[#393939]">
        <Toolbar />
        <Document />
        <IconDock />
        <aside className="flex w-[285px] shrink-0 flex-col border-r border-[#393939]">
          <div className="flex h-3 shrink-0 items-center justify-end border-b border-[#393939] bg-[#434343] pr-[6px]">
            <DoubleChevron />
          </div>
          <ColorPanel />
          <PropertiesPanel />
          <LayersPanel />
        </aside>
      </div>
      {/* highlight frame around the font size menu */}
      <div className="pointer-events-none absolute top-[15px] left-[402px] z-10 h-[325px] w-[304px] border-[15px] border-[#ff0000]" />
    </div>
  );
}
